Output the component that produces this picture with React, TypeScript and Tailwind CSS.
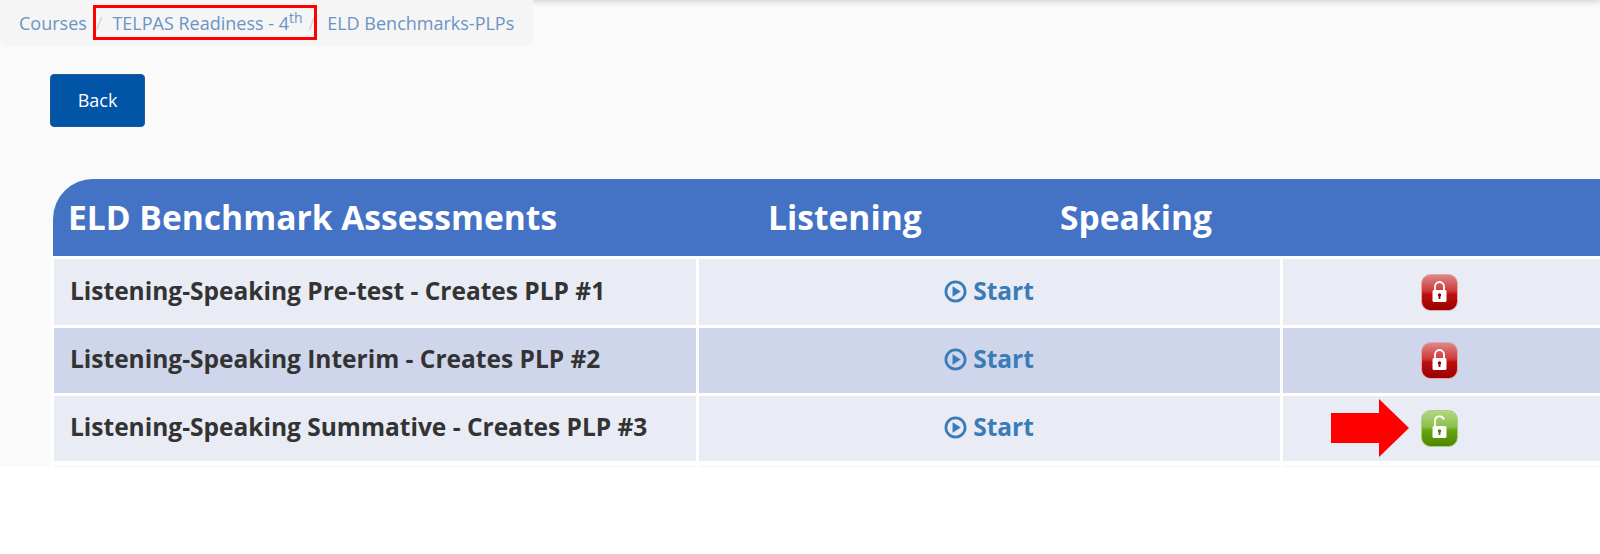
import React from 'react';

const rows = [
  { title: 'Listening-Speaking Pre-test - Creates PLP #1', open: false, bg: 'bg-[#e9ebf5]', height: 'h-[66px]' },
  { title: 'Listening-Speaking Interim - Creates PLP #2', open: false, bg: 'bg-[#cfd5ea]', height: 'h-[65px]' },
  { title: 'Listening-Speaking Summative - Creates PLP #3', open: true, bg: 'bg-[#e9ebf5]', height: 'h-[65px]' },
];

const LockIcon = ({ open }: { open: boolean }) => {
  const id = open ? 'green' : 'red';
  return (
    <svg width="37" height="37" viewBox="0 0 37 37">
      <defs>
        <linearGradient id={`${id}-top`} x1="0" y1="0" x2="0" y2="1">
          <stop offset="0" stopColor={open ? '#b3d788' : '#dd8a8a'} />
          <stop offset="0.45" stopColor={open ? '#8cc04a' : '#cf3a3a'} />
          <stop offset="0.55" stopColor={open ? '#68a40f' : '#bd0f0f'} />
          <stop offset="1" stopColor={open ? '#4c8600' : '#960000'} />
        </linearGradient>
      </defs>
      <rect x="0.5" y="0.5" width="36" height="36" rx="9" fill={`url(#${id}-top)`} stroke={open ? '#a9d07c' : '#e4a8a8'} strokeWidth="1" />
      {open ? (
        <path d="M14 16v-5a4.6 4.6 0 0 1 9-1.4" fill="none" stroke="#fff" strokeWidth="1.8" />
      ) : (
        <path d="M14 17v-4.5a4.5 4.5 0 0 1 9 0V17" fill="none" stroke="#fff" strokeWidth="1.8" />
      )}
      <rect x="11.5" y="16" width="14" height="12" rx="1.5" fill="#fff" />
      <circle cx="18.5" cy="21" r="1.7" fill={open ? '#4c8600' : '#960000'} />
      <rect x="17.6" y="21" width="1.8" height="4" fill={open ? '#4c8600' : '#960000'} />
    </svg>
  );
};

const PlayCircle = () => (
  <svg width="23" height="23" viewBox="0 0 22 22" className="shrink-0">
    <circle cx="11" cy="11" r="9.2" fill="none" stroke="#3a7cb8" strokeWidth="2.6" />
    <path d="M8.2 6 16 11l-7.8 5z" fill="#3a7cb8" />
  </svg>
);

export default function App() {
  return (
    <div className="h-[554px] w-[1600px] overflow-hidden bg-white font-['Open_Sans',sans-serif]">
      <div className="relative h-[467px] overflow-hidden bg-[#fafafa]">
        <div className="absolute inset-x-0 top-[-10px] h-[10px] bg-white shadow-[0_1px_6px_rgba(0,0,0,0.2)]" />

        <nav className="relative flex h-[46px] w-[533px] items-center rounded-b-md bg-[#f5f5f5] pl-[19px] text-[18px] text-[#6a94c4]">
          <span>Courses</span>
          <span className="ml-[9px] text-[#d4d4d4]">/</span>
          <span className="ml-[10px]">
            TELPAS Readiness - 4<sup className="text-[14px]">th</sup>
          </span>
          <span className="ml-[6px] text-[#d4d4d4]">/</span>
          <span className="ml-[12px]">ELD Benchmarks-PLPs</span>
          <div className="absolute left-[93px] top-[5px] h-[35px] w-[224px] border-[3px] border-[#f00]" />
        </nav>

        <button className="ml-[50px] mt-[28px] block h-[53px] w-[95px] rounded border border-[#1a5a9e] bg-[#0254a6] text-[18px] text-white">
          Back
        </button>

        <div className="mt-[52px]">
          <div className="ml-[53px] flex h-[77px] items-center rounded-tl-[40px] bg-[#4472c4] pl-[15px] text-[33.6px] font-bold text-white">
            <span className="w-[700px]">ELD Benchmark Assessments</span>
            <span className="w-[292px]">Listening</span>
            <span>Speaking</span>
          </div>

          <div className="ml-[51px] bg-white pl-[3px]">
            <div className="flex flex-col gap-[3px] pt-[3px]">
              {rows.map((row) => (
                <div key={row.title} className={`flex gap-[3px] ${row.height}`}>
                  <div className={`flex w-[642px] items-center pb-[2px] pl-[16px] text-[24.5px] font-bold text-[#333] ${row.bg}`}>
                    {row.title}
                  </div>
                  <div className={`flex w-[581px] items-center justify-center gap-[6px] pb-[2px] pr-[1px] text-[24.5px] font-bold text-[#3a7cb8] ${row.bg}`}>
                    <PlayCircle />
                    Start
                  </div>
                  <div className={`relative flex flex-1 items-center pl-[138px] ${row.bg}`}>
                    <LockIcon open={row.open} />
                    {row.open && (
                      <svg className="absolute left-[48px] top-[3px]" width="78" height="58" viewBox="0 0 78 58">
                        <path d="M0 14h48V0l30 29-30 29V44H0z" fill="#f00" />
                      </svg>
                    )}
                  </div>
                </div>
              ))}
            </div>

            <div className="mt-[5px] flex h-[2px] gap-[3px]">
              <div className="w-[642px] bg-[#f2f4fa]" />
              <div className="w-[581px] bg-[#f2f4fa]" />
              <div className="flex-1 bg-[#f2f4fa]" />
            </div>
          </div>
        </div>
      </div>
    </div>
  );
}
